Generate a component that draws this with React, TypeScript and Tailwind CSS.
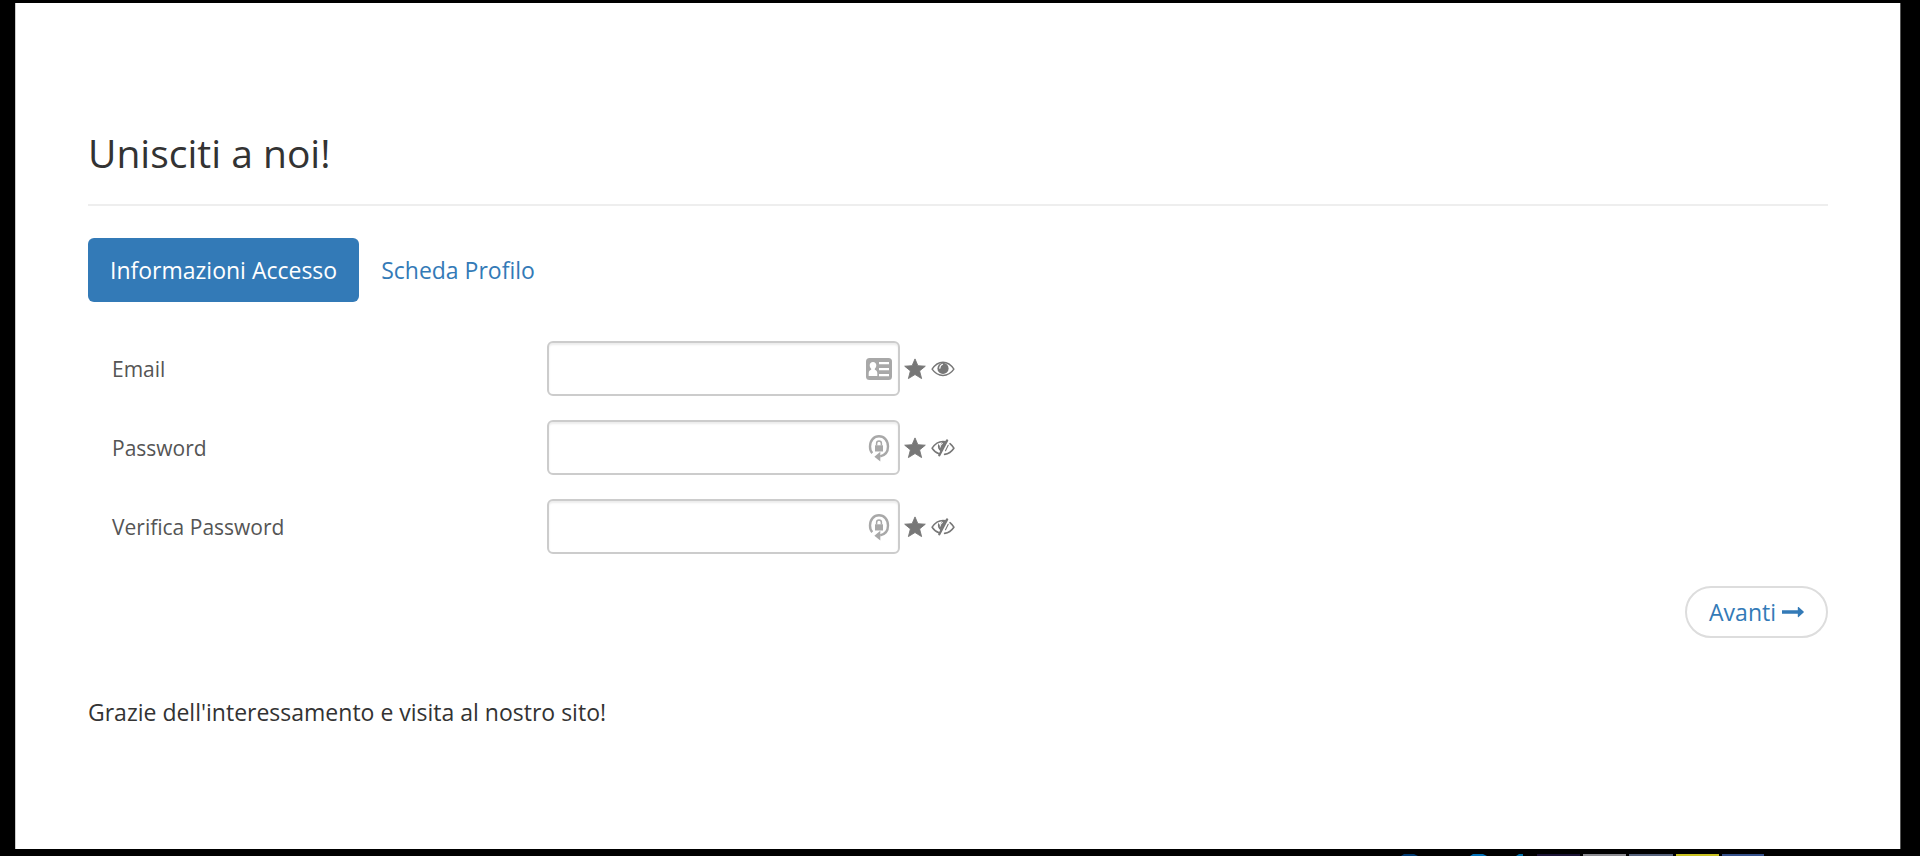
import React from "react";

function StarIcon() {
  return (
    <svg width="22" height="22" viewBox="0 0 22 22" fill="#777777" stroke="#777777" strokeWidth="0.9" strokeLinejoin="round" aria-hidden="true">
      <path d="M11 .9 13.900 7.700 21.300 8.200 15.600 12.900 17.600 20.600 11 16.500 4.400 20.600 6.400 12.900 .7 8.200 8.100 7.700Z" />
    </svg>
  );
}

function EyeIcon() {
  return (
    <svg width="24" height="16" viewBox="0 0 24 16" fill="none" aria-hidden="true">
      <path d="M1.100 8.200C4 3.600 7.700 1.200 12 1.200s8 2.400 10.900 7C20 12.400 16.300 14.500 12 14.500S4 12.400 1.100 8.200Z" stroke="#777777" strokeWidth="1.400" strokeLinejoin="round" />
      <circle cx="12" cy="7.400" r="5.600" fill="#777777" />
      <path d="M8.800 7.200c.1-2 1-3.300 2.700-3.900" stroke="#fff" strokeWidth="1.200" strokeLinecap="round" />
    </svg>
  );
}

function EyeOffIcon() {
  return (
    <svg width="24" height="18" viewBox="0 0 24 18" fill="none" stroke="#777777" strokeLinecap="round" strokeLinejoin="round" aria-hidden="true">
      <path d="M14.800 2.700C8.800 1.500 4.400 4 1.100 9.200c2 2.900 4.400 4.800 7 5.600" strokeWidth="1.500" />
      <path d="M7.300 4.800c-1.100 3.300 0 6.200 2.500 7.700l5-9.400-3.400-.2-2.600 4Z" fill="#777777" stroke="none" />
      <path d="M9.200 8.100c.1-1.700.9-2.800 2.300-3.500" stroke="#fff" strokeWidth="1" />
      <path d="M16.100 1.400 8.300 16.200" strokeWidth="2.300" />
      <path d="M17.200 6.300 14.500 11.800" strokeWidth="1.100" />
      <path d="M19 4.700c1.500 1.200 2.800 2.700 3.900 4.500-2.400 3.500-5.600 5.600-9.300 6.200" strokeWidth="1.600" />
    </svg>
  );
}

function IdCardIcon() {
  return (
    <svg width="26" height="22" viewBox="0 0 26 22" aria-hidden="true">
      <rect width="26" height="22" rx="3.500" fill="#a8a8a8" />
      <path d="M7 4c2 0 3.300 1.400 3.300 3.300 0 1.500-.6 2.700-1.500 3.400v1c1.700.6 2.500 1.700 2.500 3.500V18H2.700v-2.800c0-1.800.8-2.900 2.500-3.500v-1c-.9-.7-1.500-1.900-1.500-3.400C3.700 5.400 5 4 7 4Z" fill="#fff" />
      <path d="M13 4h10v2.200H13zM13 10h10v2.200H13zM13 16h10v2.200H13z" fill="#fff" />
    </svg>
  );
}

function PasswordIcon() {
  return (
    <svg width="22" height="28" viewBox="0 0 22 28" fill="#a8a8a8" aria-hidden="true">
      <path d="M4.300 19.200C2.600 17.600 2 15.500 2 12.600 2 6.300 5.900 2.300 11 2.300s9 4 9 10.300c0 5.200-2.800 8.800-7.800 9.800" fill="none" stroke="#a8a8a8" strokeWidth="2.400" />
      <path d="M6.400 22.700 12.300 17.800v9.700z" />
      <path d="M7 11.300h8v6.200H7z" />
      <path d="M8.600 11.600V9.500a2.400 2.400 0 0 1 4.800 0v2.100" fill="none" stroke="#a8a8a8" strokeWidth="1.500" />
    </svg>
  );
}

type FieldProps = {
  id: string;
  label: string;
  type: string;
};

function Field({ id, label, type }: FieldProps) {
  const secret = type === "password";
  return (
    <div className="flex items-center">
      <label htmlFor={id} className="w-1/4 pl-6 text-[21px] leading-8 text-[#555555]">
        {label}
      </label>
      <div className="flex items-center pl-6">
        <div className="relative">
          <input
            id={id}
            name={id}
            type={type}
            className="block h-[55px] w-[353px] rounded-md border-2 border-[#cccccc] bg-white pr-12 pl-4 text-[21px] text-[#555555] shadow-[inset_0_2px_2px_rgba(0,0,0,0.075)] outline-none focus:border-[#66afe9]"
          />
          <span className="pointer-events-none absolute inset-y-0 right-[7px] flex w-7 items-center justify-center">
            {secret ? <PasswordIcon /> : <IdCardIcon />}
          </span>
        </div>
        <span className="flex items-center gap-[5px] pl-1">
          <StarIcon />
          {secret ? <EyeOffIcon /> : <EyeIcon />}
        </span>
      </div>
    </div>
  );
}

export default function App() {
  return (
    <div className="flex min-h-screen flex-col bg-black font-['Open_Sans','Noto_Sans',sans-serif]">
      <main className="mt-[3px] mr-[19px] ml-[15px] flex-1 border-x border-l-[#cccccc] border-r-[#555555] bg-white px-18 pt-[122px] pb-12">
        <h1 className="border-b-2 border-[#eeeeee] pb-6 text-[39px] leading-[55px] text-[#333333]">
          Unisciti a noi!
        </h1>

        <nav className="mt-8 flex text-[23px] leading-8">
          <a href="#accesso" aria-current="page" className="rounded-md bg-[#337ab7] px-[22px] py-4 text-white">
            Informazioni Accesso
          </a>
          <a href="#profilo" className="rounded-md px-[22px] py-4 text-[#337ab7]">
            Scheda Profilo
          </a>
        </nav>

        <form className="mt-[39px]" onSubmit={(event) => event.preventDefault()}>
          <div className="flex flex-col gap-6">
            <Field id="email" label="Email" type="text" />
            <Field id="password" label="Password" type="password" />
            <Field id="verifica" label="Verifica Password" type="password" />
          </div>
          <div className="mt-8 flex justify-end">
            <button
              type="submit"
              className="flex h-[52px] items-center gap-1.5 rounded-[26px] border-2 border-[#dddddd] bg-white px-[22px] text-[23px] leading-8 text-[#337ab7]"
            >
              Avanti
              <svg width="22" height="12" viewBox="0 0 22 12" fill="currentColor" aria-hidden="true">
                <path d="M0 4.200h15.800V1.500q0-1 .8-.4l5 4.400q.5.5 0 1l-5 4.400q-.8.600-.8-.4V7.800H0z" />
              </svg>
            </button>
          </div>
        </form>

        <p className="mt-[58px] text-[23px] leading-8 text-[#333333]">
          Grazie dell'interessamento e visita al nostro sito!
        </p>
      </main>

      <footer className="flex h-[7px] items-end justify-end overflow-hidden pr-[156px]">
        <svg width="363" height="2" viewBox="0 0 363 2" aria-hidden="true">
          <path d="M0 2 3 0h10l4 2z" fill="#003b73" />
          <path d="M69 2 72 0h10l4 2z" fill="#0070b8" />
          <path d="M115 2l3-2h4v2z" fill="#006fa8" />
          <path d="M136 0h43v2h-43z" fill="#1c1436" />
          <path d="M182 0h43v2h-43z" fill="#8a8a90" />
          <path d="M228 0h44v2h-44z" fill="#56627c" />
          <path d="M275 0h43v2h-43z" fill="#c8c020" />
          <path d="M321 0h42v2h-42z" fill="#35518c" />
        </svg>
      </footer>
    </div>
  );
}
